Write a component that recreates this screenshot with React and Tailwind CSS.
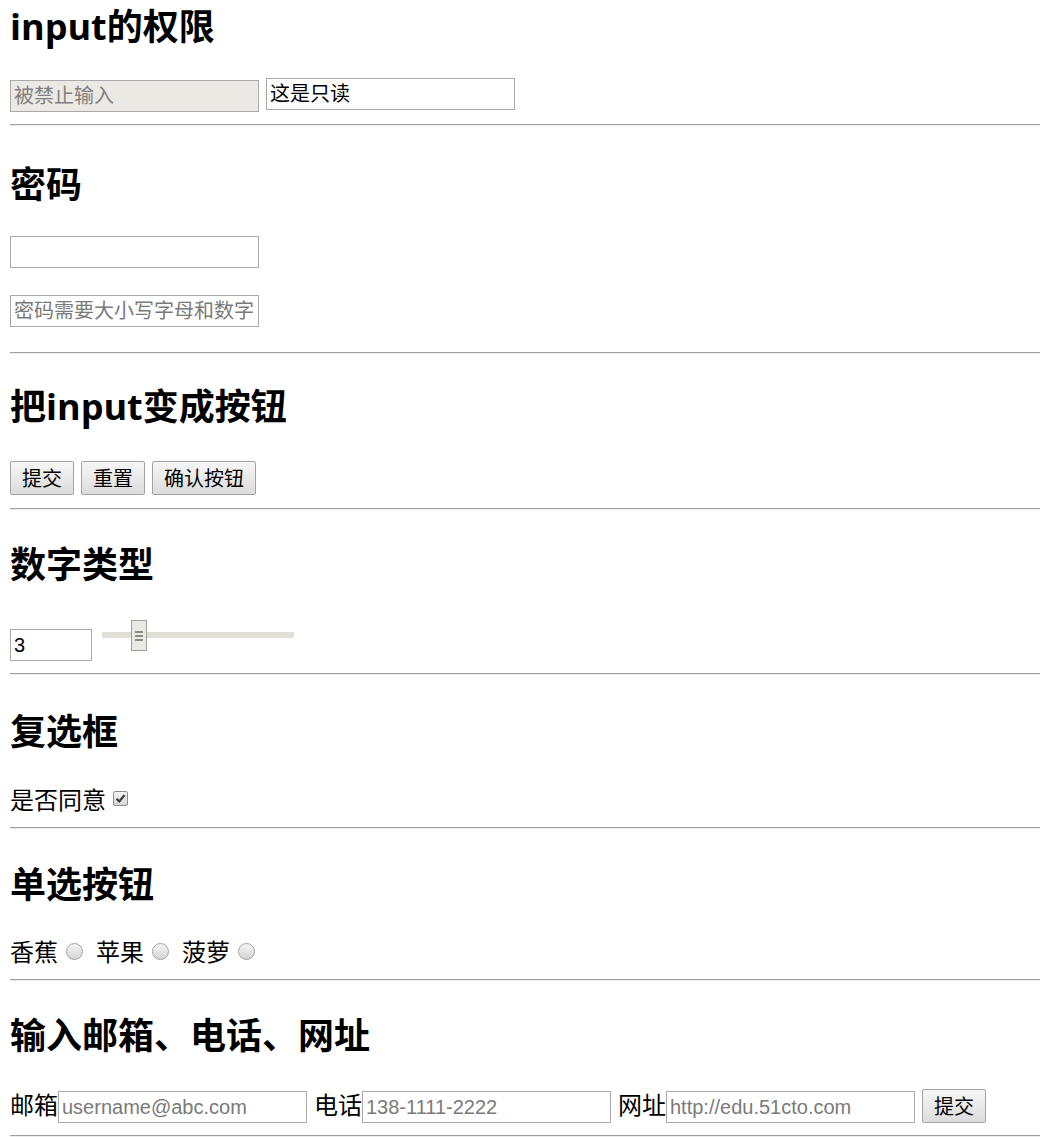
import React from 'react'

const headingFont = { fontFamily: '"Open Sans", "Noto Sans CJK SC", sans-serif' }

const Heading = ({ children, className = '' }) => (
  <h2
    className={`h-[48px] text-[36px] leading-[48px] font-bold text-black whitespace-nowrap ${className}`}
    style={headingFont}
  >
    {children}
  </h2>
)

const Rule = ({ className = '' }) => (
  <hr className={`h-0 border-0 border-t border-b border-t-[#a0a0a0] border-b-[#ededed] ${className}`} />
)

const inputCls =
  'h-[32px] border border-[#a9a9a9] px-[3px] text-[20px] text-black outline-none placeholder:text-[#7a7a7a] font-["Liberation_Sans","Noto_Sans_CJK_SC",sans-serif]'

const Button = ({ children }) => (
  <button
    className='h-[34px] px-[11px] border border-[#a3a3a3] rounded-[2px] bg-gradient-to-b from-[#f7f7f7] to-[#dcdcdc] text-[20px] leading-[30px] text-black font-["Noto_Sans_CJK_SC",sans-serif]'
  >
    {children}
  </button>
)

const Checkbox = () => (
  <span className="flex h-[15px] w-[15px] items-center justify-center rounded-[2px] border border-[#8e8e8e] bg-gradient-to-b from-[#f4f4f4] to-[#d6d6d6]">
    <svg width="11" height="11" viewBox="0 0 11 11">
      <path d="M1.5 5.8 L4.3 8.5 L9.6 2" fill="none" stroke="#3c3c3c" strokeWidth="2.2" />
    </svg>
  </span>
)

const Radio = ({ className = '' }) => (
  <span
    className={`block h-[17px] w-[17px] rounded-full border border-[#a3a3a3] bg-gradient-to-b from-[#f6f6f6] to-[#d4d4d4] ${className}`}
  />
)

const Slider = () => (
  <div className="relative ml-[10px] h-[31px] w-[192px]">
    <div className="absolute left-0 right-0 top-[12px] h-[6px] bg-[#e2ded8]" />
    <div className="absolute left-[29px] top-0 flex h-[31px] w-[16px] flex-col items-center justify-center gap-[2px] border border-[#a19d97] bg-[#ebe9e4]">
      <span className="block h-[2px] w-[8px] bg-[#8e8a85]" />
      <span className="block h-[2px] w-[8px] bg-[#8e8a85]" />
      <span className="block h-[2px] w-[8px] bg-[#8e8a85]" />
    </div>
  </div>
)

export default function App() {
  return (
    <div className='min-h-[1137px] bg-white pl-[10px] pr-[4px] pt-[3px] text-[24px] leading-[32px] text-black font-["Noto_Sans_CJK_SC",sans-serif]'>
      {/* input的权限 */}
      <Heading className="mb-[27px]">input的权限</Heading>
      <div className="flex items-start gap-[7px]">
        <input
          disabled
          placeholder="被禁止输入"
          className={`${inputCls} mt-[2px] w-[249px] bg-[#ebe9e3] placeholder:text-[#808080]`}
        />
        <input readOnly value="这是只读" className={`${inputCls} w-[249px] bg-white`} />
      </div>
      <Rule className="mt-[12px]" />

      {/* 密码 */}
      <Heading className="mt-[35px] mb-[27px]">密码</Heading>
      <div className="flex flex-col gap-[27px]">
        <input type="password" className={`${inputCls} w-[249px] bg-white`} />
        <input type="password" placeholder="密码需要大小写字母和数字" className={`${inputCls} w-[249px] bg-white`} />
      </div>
      <Rule className="mt-[25px]" />

      {/* 按钮 */}
      <Heading className="mt-[29px] mb-[30px]">把input变成按钮</Heading>
      <div className="flex items-start gap-[7px]">
        <Button>提交</Button>
        <Button>重置</Button>
        <Button>确认按钮</Button>
      </div>
      <Rule className="mt-[13px]" />

      {/* 数字类型 */}
      <Heading className="mt-[31px] mb-[31px]">数字类型</Heading>
      <div className="flex items-start">
        <input readOnly value="3" className={`${inputCls} mt-[9px] w-[82px] bg-white`} />
        <Slider />
      </div>
      <Rule className="mt-[12px]" />

      {/* 复选框 */}
      <Heading className="mt-[33px] mb-[27px]">复选框</Heading>
      <div className="flex items-start">
        <span>是否同意</span>
        <span className="ml-[7px] mt-[8px]">
          <Checkbox />
        </span>
      </div>
      <Rule className="mt-[12px]" />

      {/* 单选按钮 */}
      <Heading className="mt-[32px] mb-[26px]">单选按钮</Heading>
      <div className="flex items-start">
        <span>香蕉</span>
        <Radio className="ml-[8px] mr-[13px] mt-[8px]" />
        <span>苹果</span>
        <Radio className="ml-[8px] mr-[13px] mt-[8px]" />
        <span>菠萝</span>
        <Radio className="ml-[8px] mt-[8px]" />
      </div>
      <Rule className="mt-[12px]" />

      {/* 邮箱电话网址 */}
      <Heading className="mt-[31px] mb-[28px]">输入邮箱、电话、网址</Heading>
      <div className="flex items-start">
        <span>邮箱</span>
        <input type="email" placeholder="username@abc.com" className={`${inputCls} mt-[3px] w-[249px] bg-white`} />
        <span className="ml-[7px]">电话</span>
        <input type="tel" placeholder="138-1111-2222" className={`${inputCls} mt-[3px] w-[249px] bg-white`} />
        <span className="ml-[7px]">网址</span>
        <input type="url" placeholder="http://edu.51cto.com" className={`${inputCls} mt-[3px] w-[249px] bg-white`} />
        <span className="ml-[7px]">
          <Button>提交</Button>
        </span>
      </div>
      <Rule className="mt-[12px]" />
    </div>
  )
}
